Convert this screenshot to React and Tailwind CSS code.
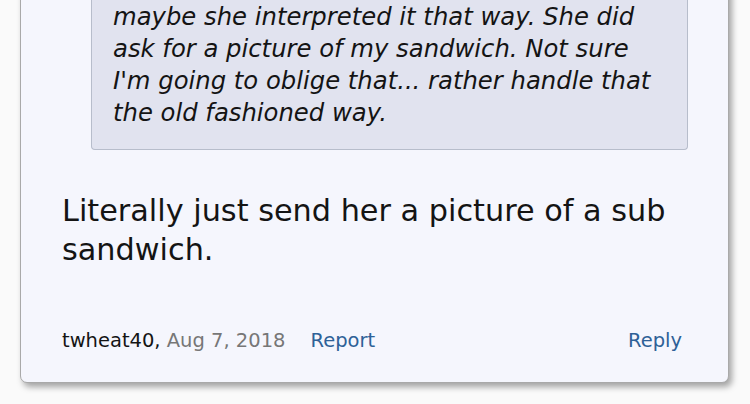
export default function App() {
  return (
    <div className="h-[404px] overflow-hidden bg-[#fafafa]" style={{ fontFamily: '"DejaVu Sans", Verdana, sans-serif' }}>
      <div className="mx-[20px] -mt-[40px] w-[709px] rounded-b-[7px] border border-[#a9a9a9] bg-[#f5f6fd] pb-[27px] pl-[41px] pr-[46px] shadow-[3px_4px_6px_rgba(0,0,0,0.35)]">
        <blockquote className="-mr-[6px] ml-[29px] whitespace-nowrap rounded-b-[4px] border border-t-0 border-[#b7bdcb] bg-[#e1e3ef] pb-[20px] pl-[21px] pr-[20px] pt-[40px] text-[24.3px] italic leading-[32px] text-[#141414]">
          maybe she interpreted it that way. She did
          <br />
          ask for a picture of my sandwich. Not sure
          <br />
          I'm going to oblige that... rather handle that
          <br />
          the old fashioned way.
        </blockquote>
        <p className="mt-[41px] text-[30.3px] leading-[39px] text-[#141414]">
          Literally just send her a picture of a sub sandwich.
        </p>
        <div className="mt-[58px] flex items-center text-[19.5px] leading-[28px]">
          <span className="text-[#141414]">twheat40, <span className="text-[#777777]">Aug 7, 2018</span></span>
          <a className="ml-[25px] text-[#2e6197]">Report</a>
          <a className="ml-auto text-[#2e6197]">Reply</a>
        </div>
      </div>
    </div>
  );
}
